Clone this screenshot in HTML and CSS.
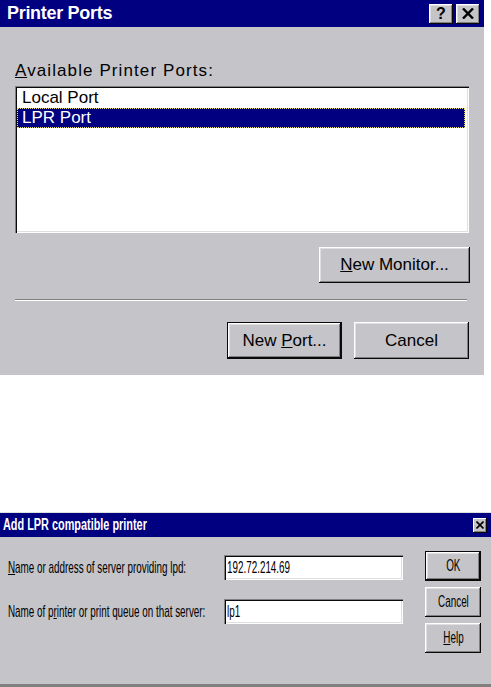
FILE: index.html
```html
<!DOCTYPE html>
<html lang="en">
<head>
  <meta charset="UTF-8" />
  <title>Printer Ports</title>
  <link rel="stylesheet" href="styles.css">
</head>
<body>
  <div class="dialog ports">
    <div class="titlebar">
      <span class="title">Printer Ports</span>
      <div class="title-buttons">
        <span class="tbtn help">?</span>
        <span class="tbtn">
          <svg width="12" height="11" viewBox="0 0 12 11"><path d="M1 0.5 L11 10.5 M11 0.5 L1 10.5" stroke="#000" stroke-width="2.4" fill="none"/></svg>
        </span>
      </div>
    </div>
    <div class="ports-body">
      <div class="label"><u>A</u>vailable Printer Ports:</div>
      <div class="listbox">
        <div class="item">Local Port</div>
        <div class="item selected">LPR Port</div>
      </div>
      <div class="button-row">
        <button class="btn wide"><u>N</u>ew Monitor...</button>
      </div>
      <div class="separator"></div>
      <div class="button-row bottom">
        <button class="btn default">New <u>P</u>ort...</button>
        <button class="btn">Cancel</button>
      </div>
    </div>
  </div>

  <div class="dialog lpr">
    <div class="titlebar small">
      <span class="title sq-title">Add LPR compatible printer</span>
      <span class="close-btn">
        <svg width="8" height="8" viewBox="0 0 8 8"><path d="M0.5 0.5 L7.5 7.5 M7.5 0.5 L0.5 7.5" stroke="#000" stroke-width="1.6" fill="none"/></svg>
      </span>
    </div>
    <div class="lpr-body">
      <div class="fields">
        <div class="field-label"><span class="sq"><u>N</u>ame or address of server providing lpd:</span></div>
        <div class="textbox"><span class="sq">192.72.214.69</span></div>
        <div class="field-label"><span class="sq">Name of p<u>r</u>inter or print queue on that server:</span></div>
        <div class="textbox"><span class="sq">lp1</span></div>
      </div>
      <div class="side-buttons">
        <div class="btn small default"><span class="sq center">OK</span></div>
        <div class="btn small"><span class="sq center">Cancel</span></div>
        <div class="btn small"><span class="sq center"><u>H</u>elp</span></div>
      </div>
    </div>
  </div>
</body>
</html>
```

FILE: styles.css
```css
body {
  margin: 0;
  background: #ffffff;
  font-family: "Liberation Sans", Arial, sans-serif;
  color: #000;
  width: 491px;
}

.dialog {
  background: #c5c4c8;
}

/* ---------- Printer Ports ---------- */
.ports {
  width: 484px;
  height: 375px;
}
.titlebar {
  background: #000080;
  height: 27px;
  display: flex;
  align-items: center;
  justify-content: space-between;
  padding: 0 4px 0 7px;
}
.title {
  color: #fff;
  font-weight: bold;
  font-size: 18px;
  letter-spacing: -0.3px;
}
.title-buttons {
  display: flex;
  gap: 3px;
}
.tbtn {
  width: 24px;
  height: 20px;
  background: #c5c4c8;
  box-shadow: inset -1px -1px #0a0a0a, inset 1px 1px #fff, inset -2px -2px #808080, inset 2px 2px #dfdfdf;
  display: flex;
  align-items: center;
  justify-content: center;
  box-sizing: border-box;
}
.tbtn.help {
  font-weight: bold;
  font-size: 16px;
  line-height: 20px;
}

.ports-body {
  padding: 34px 15px 0 15px;
}
.label {
  font-size: 17px;
  line-height: 20px;
  letter-spacing: 1.1px;
}
.listbox {
  margin-top: 5px;
  height: 147px;
  background: #fff;
  box-sizing: border-box;
  padding: 2px;
  box-shadow: inset 1px 1px #808080, inset 2px 2px #0a0a0a, inset -1px -1px #fff, inset -2px -2px #dfdfdf;
}
.item {
  font-size: 17px;
  padding-left: 4px;
  margin-right: 2px;
  border: 1px dotted transparent;
  height: 20px;
  box-sizing: border-box;
  line-height: 18px;
}
.item.selected {
  background: #000080;
  color: #fff;
  border-color: #e8e070;
}

.button-row {
  display: flex;
  justify-content: flex-end;
  gap: 12px;
  margin-top: 14px;
}
.button-row.bottom {
  margin-top: 21px;
}
.btn {
  background: #c5c4c8;
  border: none;
  font-family: "Liberation Sans", Arial, sans-serif;
  font-size: 17px;
  color: #000;
  padding: 0;
  width: 115px;
  height: 37px;
  box-sizing: border-box;
  box-shadow: inset -1px -1px #0a0a0a, inset 1px 1px #fff, inset -2px -2px #808080, inset 2px 2px #dfdfdf;
}
.btn.wide {
  width: 151px;
  height: 36px;
  margin-right: -1px;
}
.btn.default {
  box-shadow: inset 0 0 0 1px #0a0a0a, inset -2px -2px #0a0a0a, inset 2px 2px #fff, inset -3px -3px #808080, inset 3px 3px #dfdfdf;
}
.separator {
  margin-top: 16px;
  margin-right: 2px;
  border-top: 1px solid #808080;
  border-bottom: 1px solid #fff;
}

/* ---------- Add LPR compatible printer ---------- */
.lpr {
  margin-top: 137px;
  height: 175px;
  box-sizing: border-box;
  border-top: 1px solid #dfdfdf;
  border-bottom: 3px solid #808080;
}
.titlebar.small {
  height: 24px;
  padding: 0 4px 0 3px;
}
.sq-title {
  font-size: 16px;
  letter-spacing: 0;
  display: inline-block;
  transform: scaleX(0.68);
  transform-origin: 0 50%;
  white-space: nowrap;
}
.close-btn {
  width: 14px;
  height: 15px;
  background: #c5c4c8;
  box-sizing: border-box;
  box-shadow: inset -1px -1px #0a0a0a, inset 1px 1px #fff, inset -2px -2px #808080;
  display: flex;
  align-items: center;
  justify-content: center;
}

.lpr-body {
  display: flex;
  padding: 14px 10px 0 8px;
}
.fields {
  display: grid;
  grid-template-columns: 216px 179px;
  row-gap: 19px;
  margin-top: 4px;
  align-items: center;
  align-content: start;
}
.sq {
  display: inline-block;
  font-size: 17px;
  white-space: nowrap;
  transform: scaleX(0.58);
  transform-origin: 0 50%;
}
.sq.center {
  transform-origin: 50% 50%;
}
.field-label {
  font-size: 17px;
  line-height: 20px;
}
.textbox {
  height: 25px;
  background: #fff;
  box-sizing: border-box;
  padding: 2px 2px 0 3px;
  line-height: 21px;
  box-shadow: inset 1px 1px #808080, inset 2px 2px #0a0a0a, inset -1px -1px #fff, inset -2px -2px #dfdfdf;
}
.side-buttons {
  margin-left: 22px;
  display: flex;
  flex-direction: column;
  gap: 6px;
}
.btn.small {
  width: 56px;
  height: 30px;
  display: flex;
  align-items: center;
  justify-content: center;
}
```
